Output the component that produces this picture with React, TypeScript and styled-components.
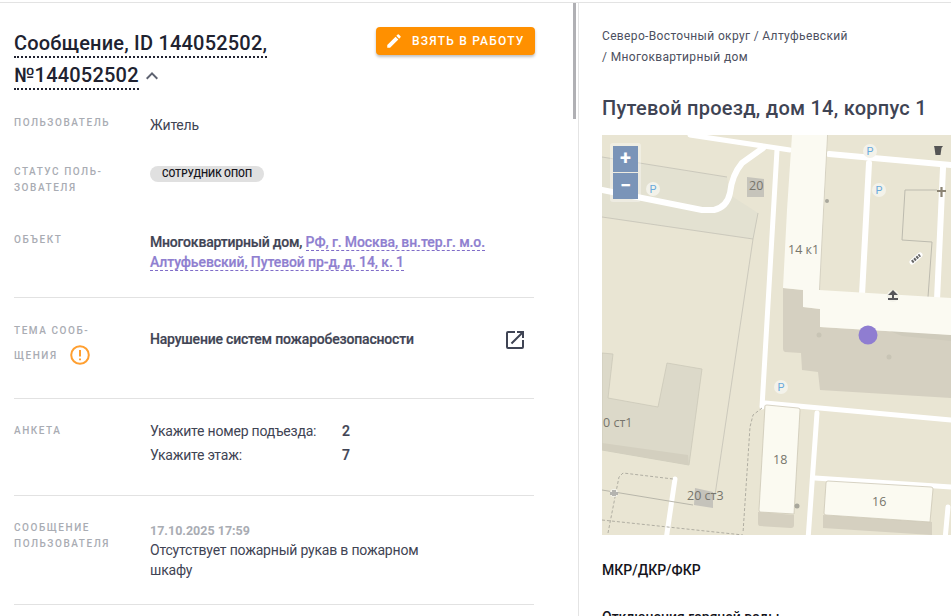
import React from "react";
import styled, { createGlobalStyle } from "styled-components";

const Global = createGlobalStyle`
  html, body { margin: 0; padding: 0; height: 100%; overflow: hidden; background: #fff; }
  body { font-family: Roboto, "Liberation Sans", sans-serif; color: #3f4454; }
  #root { height: 100%; }
`;
const Page = styled.div`
  display: flex; width: 951px; height: 614px; margin-top: 2px; overflow: hidden;
  border-top: 1px solid #e3e3e3; box-sizing: border-box;
`;
const LeftPane = styled.div`
  position: relative; flex: none; width: 579px; height: 100%; overflow: hidden;
  padding: 0 44px 0 14px; box-sizing: border-box; border-right: 1px solid #e4e4e4;
`;
const Thumb = styled.div`
  position: absolute; left: 573px; top: 0; width: 3px; height: 116px; background: #b0b0b4;
`;
const Head = styled.div`
  display: flex; justify-content: space-between; align-items: flex-start; padding-top: 24px; height: 85px;
`;
const Title = styled.h1`
  margin: 0; width: 340px; font-size: 20px; line-height: 32px; font-weight: 500; color: #202230; letter-spacing: .2px;
`;
const Dotted = styled.span`
  border-bottom: 2px dotted #202230; padding-bottom: 1px;
`;
const Chevron = styled.svg`
  width: 24px; height: 24px; vertical-align: -6px; margin-left: 1px; fill: #5d6270;
`;
const Action = styled.button`
  display: flex; align-items: center; gap: 9px; width: 159px; height: 28px; flex: none; border: 0; border-radius: 4px;
  margin-right: -1px; padding: 0 0 0 9px; background: #ff9000; color: #fff;
  font: 500 12px Roboto, sans-serif; letter-spacing: 1.2px;
  box-shadow: 0 2px 3px rgba(0,0,0,.25);
`;
const Row = styled.div<{ $h: number; $line?: boolean }>`
  display: grid; grid-template-columns: 136px 1fr; height: ${p => p.$h}px; box-sizing: border-box;
  border-bottom: ${p => (p.$line ? "1px solid #e2e2e2" : "0")};
  position: relative;
`;
const Label = styled.div<{ $top: number; $lh?: number }>`
  font-size: 10px; font-weight: 500; letter-spacing: 1.55px; color: #a9acb3; text-transform: uppercase;
  line-height: ${p => p.$lh ?? 16}px; padding-top: ${p => p.$top}px;
`;
const Value = styled.div<{ $top: number }>`
  font-size: 14px; line-height: 20px; padding-top: ${p => p.$top}px; color: #3f4454; min-width: 0; letter-spacing: -.2px;
`;
const Chip = styled.span`
  display: inline-block; height: 16px; line-height: 16px; width: 114px; text-align: center; border-radius: 8px;
  background: #e0e0e0; color: #15151c; font-size: 10px; font-weight: 500; letter-spacing: 0;
`;
const Strong = styled.b`font-weight: 500; line-height: 20px; letter-spacing: -.2px; -webkit-text-stroke: .2px currentColor;`;
const Link = styled.span`
  color: #8f7fd0; font-weight: 500; border-bottom: 1px dashed #7f6cc8; letter-spacing: -.1px; -webkit-text-stroke: .2px currentColor;
`;
const AlertBadge = styled.svg`
  width: 20px; height: 20px; vertical-align: -6px; margin-left: 12px;
`;
const ExternalIcon = styled.svg`
  position: absolute; right: 7px; top: 30px; width: 24px; height: 24px; fill: #3f4454;
`;
const Survey = styled.div`
  display: grid; grid-template-columns: 192px 1fr; row-gap: 3px; line-height: 21px;
`;
const Dim = styled.div`font-weight: 700; color: #a9acb3; font-size: 12.5px; line-height: 19px; letter-spacing: 0;`;
const MessageText = styled.div`width: 272px;`;
const RightPane = styled.div`
  flex: 1; min-width: 0; padding: 23px 0 0 23px; overflow: hidden;
`;
const Crumbs = styled.div`
  font-size: 12px; line-height: 21px; letter-spacing: 0.35px; color: #4c5060; width: 252px;
`;
const Street = styled.h2`
  margin: 28px 0 0; font-size: 20px; line-height: 24px; font-weight: 500; letter-spacing: .25px; color: #3f4454; white-space: nowrap;
`;
const MapBox = styled.div`
  position: relative; margin-top: 15px; width: 349px; height: 400px; overflow: hidden; background: #e9e5d3;
`;
const MapArt = styled.svg`display: block; width: 349px; height: 400px;`;
const Zoom = styled.div`
  position: absolute; left: 8px; top: 8px; display: flex; flex-direction: column; gap: 1px;
  background: rgba(255,255,255,.35); border-radius: 3px; padding: 3px;
`;
const ZoomBtn = styled.div`
  width: 25px; height: 26px; background: #7a94b8; color: #fff; font-size: 20px; font-weight: 700;
  text-align: center; line-height: 25px;
`;
const Section = styled.div`
  margin-top: 26px; font-size: 14px; line-height: 18px; font-weight: 500; color: #15151c;
`;
const SectionNext = styled(Section)`margin-top: 29px;`;

const Road = (p: { d: string; w?: number }) => <path d={p.d} stroke="#fff" strokeWidth={p.w ?? 5} fill="none" strokeLinecap="round" strokeLinejoin="round" />;
const Park = ({ x, y }: { x: number; y: number }) => (
  <g>
    <circle cx={x} cy={y} r="7" fill="#f3f2ea" />
    <text x={x} y={y + 4} fontSize="11" textAnchor="middle" fill="#6aa9dc" fontFamily="Roboto">P</text>
  </g>
);
const MapLabel = styled.text`font-family: "Open Sans", Roboto, sans-serif; font-size: 12.5px; fill: #77756c;`;

const MapDrawing = () => (
  <MapArt viewBox="0 0 349 400">
    <rect width="349" height="400" fill="#e9e5d3" />
    <path d="M0 22 L125 42 L128 60 L156 78 L151 104 L0 82Z" fill="#e3e1d1" />
    <path d="M0 22 L125 42 M0 82 L151 104 L156 78 M151 104 L113 360" stroke="#c4c2b6" strokeWidth=".8" fill="none" />
    <path d="M0 218 L11 219 L6 263 L56 272 L65 228 L100 234 L87 330 L0 315Z" fill="#dcd9c9" stroke="#c9c6b6" strokeWidth=".7" strokeLinejoin="round" />
    <path d="M0 308 L86 320 L87 330 L0 315Z" fill="#d3cfbf" />
    <Road d="M0 55 L100 75 L112 75 Q125 72 128 58 Q130 40 140 28 L161 13" w={6} />
    <Road d="M88 0 L188 15" w={5} />
    <Road d="M175 15 L160 272" w={5} />
    <Road d="M163 268 L349 285" w={5} />
    <Road d="M73 344 L64 405" w={5} />
    <Road d="M215 278 L206 405" w={5} />
    <Road d="M213 343 L349 352" w={5} />
    <Road d="M346 372 L343 405" w={5} />
    <Road d="M227 19 L349 30" w={6} />
    <Road d="M267 28 L260 160" w={6} />
    <Road d="M341 33 L335 165" w={6} />
    <path d="M335 55 L303 55 L300 105 L330 107 L326 162" stroke="#bdbbaf" fill="none" />
    <path d="M0 355 L91 370" stroke="#b8b6aa" fill="none" />
    <path d="M6 398 L15 352 L17 342 L21 338 L71 344 M0 385 L141 400 M160 273 L151 280 L148 292 L141 398" stroke="#a9a79c" strokeWidth=".9" strokeDasharray="3 2" fill="none" />
    <path d="M226 0 L222 75 L218 155 L216 155 L221 75 L225 0Z" fill="#d6d2c3" />
    <path d="M181 153 L201 155 L201 172 L218 174 L218 192 L349 200 L349 263 L218 255 L216 237 L200 235 L199 218 L183 217 Q181 216 181 214Z" fill="#d5d0c1" />
    <path d="M285 195 L349 200 L349 206 L300 201Z" fill="#cfcbbc" />
    <path d="M190 0 L225 0 L221 75 L217 155 L349 163 L349 200 L218 192 L218 174 L201 172 L201 155 L181 153 L185 75Z" fill="#fbfaf2" />
    <path d="M156 377 L192 380 L192 390 Q192 393 189 393 L158 391 Q156 391 156 388Z" fill="#d5d0c0" />
    <path d="M163 271 Q163 270 165 270 L196 273 Q198 273 198 275 L192 379 L158 377 Q157 376 157 375Z" fill="#fbfaf1" stroke="#cdc8b6" strokeWidth=".8" />
    <path d="M221 380 L330 387 L330 400 L221 393Z" fill="#d5d0c0" />
    <path d="M224 348 Q224 346 226 346 L329 352 Q331 352 331 354 L328 387 L224 380 Q222 380 222 378Z" fill="#fbfaf1" stroke="#cdc8b6" strokeWidth=".8" />
    <path d="M145 42 L162 44 L162 62 L145 62Z" fill="#c6c4bb" />
    <path d="M93 353 L111 357 L111 373 L92 370Z" fill="#c5c3bb" />
    <MapLabel x="147" y="55">20</MapLabel>
    <MapLabel x="186" y="119">14 к1</MapLabel>
    <MapLabel x="1" y="292">0 ст1</MapLabel>
    <MapLabel x="85" y="365">20 ст3</MapLabel>
    <MapLabel x="171" y="329">18</MapLabel>
    <MapLabel x="270" y="371">16</MapLabel>
    <Park x={51} y={54} />
    <Park x={268} y={16} />
    <Park x={277} y={55} />
    <Park x={179} y={252} />
    <circle cx="266" cy="200" r="9.5" fill="#8f7dd1" />
    <circle cx="291" cy="161" r="6" fill="#f3f2ea" />
    <path d="M286 160 l5 -5 l5 5z M290 160 h2 v3 h-2z M286 163 h10 v2 h-10z" fill="#55555a" />
    <path d="M310 127 l8 -7" stroke="#fff" strokeWidth="5" strokeLinecap="round" />
    <path d="M310 127 l8 -7" stroke="#666" strokeWidth="3" strokeDasharray="2 1" />
    <path d="M332 11 h9 l-1.500 2 l-1 7 h-5 l-1 -7z" fill="#555" />
    <path d="M335 56 h9 M339.500 52 v10" stroke="#8b8474" strokeWidth="2.200" />
    <circle cx="225" cy="66" r="2" fill="#a8a79c" />
    <circle cx="217" cy="200" r="2.500" fill="#c8c4b5" />
    <circle cx="287" cy="222" r="2.500" fill="#c8c4b5" />
    <circle cx="195" cy="371" r="2.500" fill="#a8a79c" />
    <circle cx="12" cy="358" r="4" fill="#f3f2ea" />
    <path d="M9 357 v3 M11 355 v6 M13 355 v6 M15 357 v3" stroke="#777" />
  </MapArt>
);

export default function App() {
  return (
    <Page>
      <Global />
      <LeftPane>
        <Thumb />
        <Head>
          <Title>
            <Dotted>Сообщение, ID 144052502, №144052502</Dotted>
            <Chevron viewBox="0 0 24 24"><path d="M7.41 15.41 12 10.83l4.59 4.58L18 14l-6-6-6 6z" /></Chevron>
          </Title>
          <Action>
            <svg width="18" height="18" viewBox="0 0 24 24" fill="#fff"><path d="M3 17.25V21h3.75L17.81 9.94l-3.75-3.75L3 17.25zM20.71 7.04a1 1 0 0 0 0-1.41l-2.34-2.34a1 1 0 0 0-1.41 0l-1.83 1.83 3.75 3.75 1.83-1.83z" /></svg>
            ВЗЯТЬ В РАБОТУ
          </Action>
        </Head>
        <Row $h={49}><Label $top={3}>Пользователь</Label><Value $top={3}>Житель</Value></Row>
        <Row $h={71}><Label $top={3}>Статус поль-<br />зователя</Label><Value $top={1}><Chip>СОТРУДНИК ОПОП</Chip></Value></Row>
        <Row $h={66} $line><Label $top={0}>Объект</Label><Value $top={0}><Strong>Многоквартирный дом,</Strong> <Link>РФ, г. Москва, вн.тер.г. м.о. Алтуфьевский, Путевой пр-д, д. 14, к. 1</Link></Value></Row>
        <Row $h={101} $line>
          <Label $top={20} $lh={25}>Тема сооб-<br />щения<AlertBadge viewBox="0 0 20 20"><circle cx="10" cy="10" r="8.8" fill="none" stroke="#ff9f30" strokeWidth="2" /><path d="M10 5v6.5M10 13.500v1.700" stroke="#ff9f30" strokeWidth="2" /></AlertBadge></Label>
          <Value $top={31}><Strong>Нарушение систем пожаробезопасности</Strong></Value>
          <ExternalIcon viewBox="0 0 24 24"><path d="M19 19H5V5h7V3H5a2 2 0 0 0-2 2v14a2 2 0 0 0 2 2h14a2 2 0 0 0 2-2v-7h-2v7zM14 3v2h3.590l-9.830 9.830 1.410 1.410L19 6.410V10h2V3h-7z" /></ExternalIcon>
        </Row>
        <Row $h={97} $line>
          <Label $top={24}>Анкета</Label>
          <Value $top={22}>
            <Survey><span>Укажите номер подъезда:</span><Strong>2</Strong><span>Укажите этаж:</span><Strong>7</Strong></Survey>
          </Value>
        </Row>
        <Row $h={109} $line>
          <Label $top={24}>Сообщение<br />пользователя</Label>
          <Value $top={25}><Dim>17.10.2025 17:59</Dim><MessageText>Отсутствует пожарный рукав в пожарном шкафу</MessageText></Value>
        </Row>
      </LeftPane>
      <RightPane>
        <Crumbs>Северо-Восточный округ / Алтуфьевский / Многоквартирный дом</Crumbs>
        <Street>Путевой проезд, дом 14, корпус 1</Street>
        <MapBox>
          <MapDrawing />
          <Zoom><ZoomBtn>+</ZoomBtn><ZoomBtn>−</ZoomBtn></Zoom>
        </MapBox>
        <Section>МКР/ДКР/ФКР</Section>
        <SectionNext>Отключения горячей воды</SectionNext>
      </RightPane>
    </Page>
  );
}
